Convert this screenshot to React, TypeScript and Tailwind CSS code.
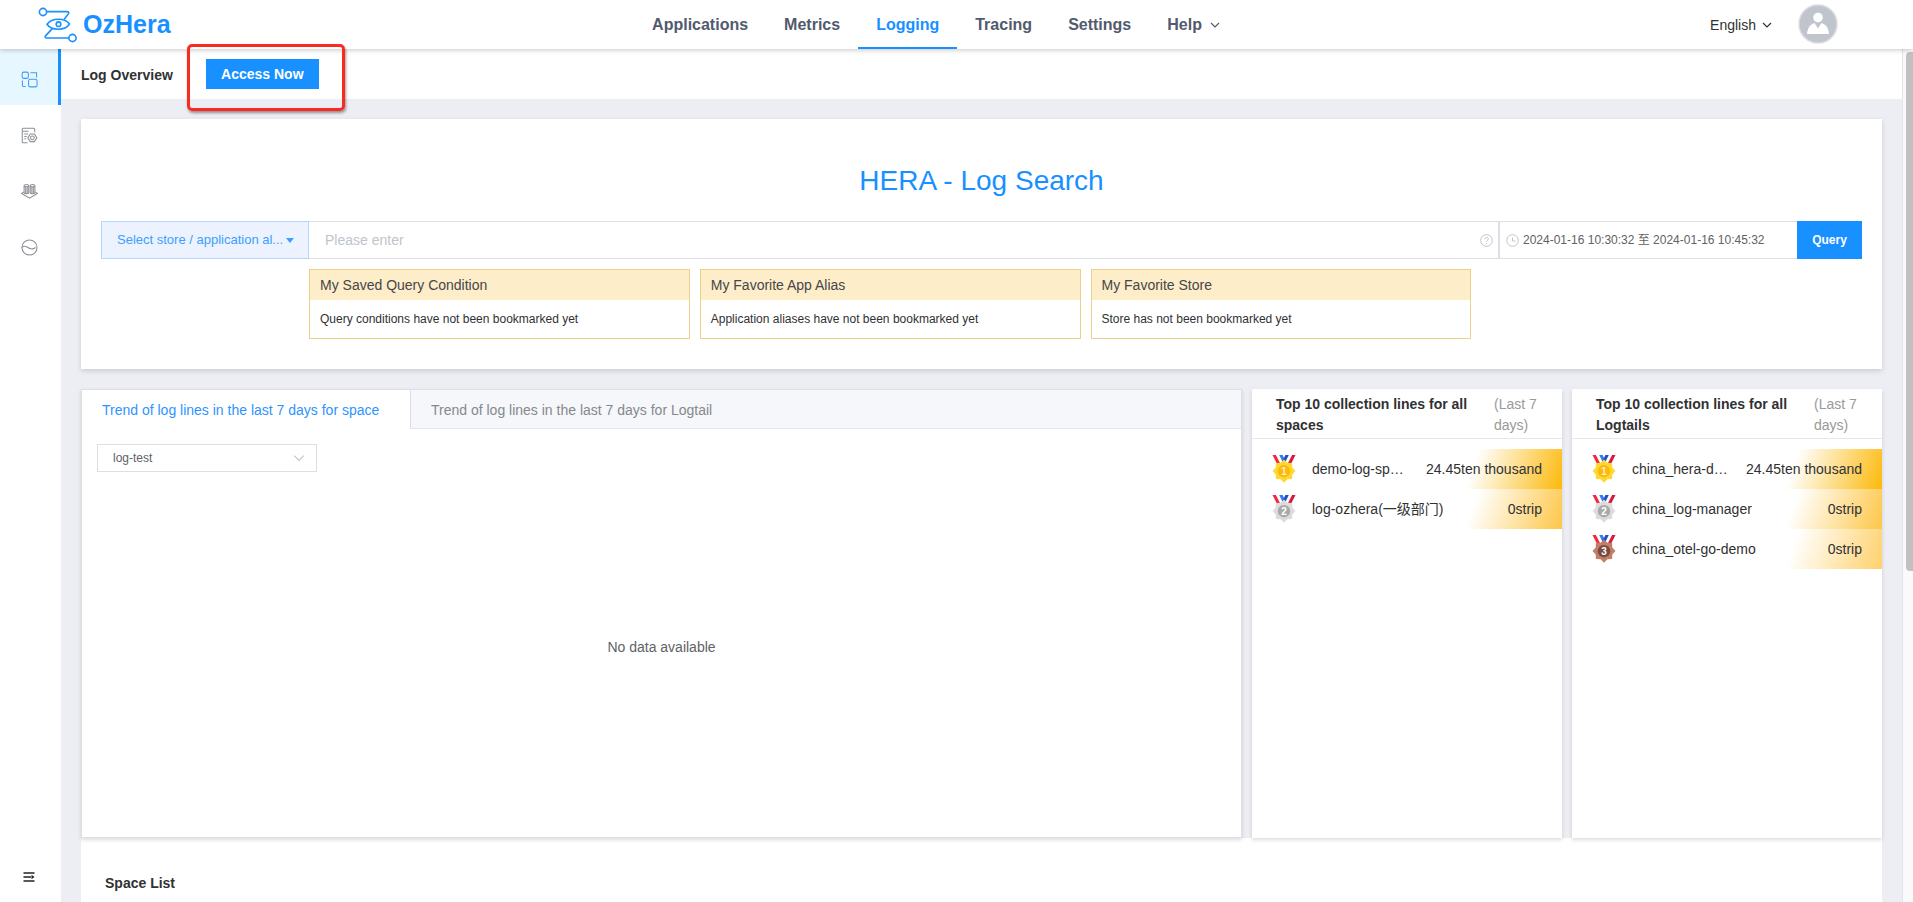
import type { ReactNode } from "react";

type Rank = 1 | 2 | 3;

interface RankRow {
  rank: Rank;
  name: string;
  value: string;
}

const medalColors: Record<Rank, { star: string; disc: string; digit: string }> = {
  1: { star: "#fdd835", disc: "#fbb90b", digit: "#fff3c4" },
  2: { star: "#dcdcdc", disc: "#a9a9a9", digit: "#ffffff" },
  3: { star: "#c07f68", disc: "#7a4a40", digit: "#ffffff" },
};

const rowShade: Record<Rank, string> = {
  1: "bg-[linear-gradient(110deg,#ffffff_12%,#fcb90b_100%)]",
  2: "bg-[linear-gradient(110deg,#ffffff_12%,#fdc748_100%)]",
  3: "bg-[linear-gradient(110deg,#ffffff_12%,#fed16b_100%)]",
};

const topSpaces: RankRow[] = [
  { rank: 1, name: "demo-log-sp…", value: "24.45ten thousand" },
  { rank: 2, name: "log-ozhera(一级部门)", value: "0strip" },
];

const topLogtails: RankRow[] = [
  { rank: 1, name: "china_hera-d…", value: "24.45ten thousand" },
  { rank: 2, name: "china_log-manager", value: "0strip" },
  { rank: 3, name: "china_otel-go-demo", value: "0strip" },
];

function Logo() {
  return (
    <svg width="39" height="36" viewBox="0 0 39 36" fill="none" stroke="#1890ff" strokeWidth="1.6" aria-hidden="true">
      <circle cx="5" cy="5" r="3.6" />
      <circle cx="34.500" cy="31" r="3.6" />
      <path d="M8.500 4.600H29c1.800 0 2.200 1 1.300 2.300L26 12.500" />
      <path d="M31 31H9c-2 0-2.300-1-1.200-2.400l6.500-7" />
      <path d="M9 17.200c2.500-3.300 6.700-5 11.500-5s8.800 1.700 11 4.800c-2.200 3.400-6.500 5.200-11.300 5.200S11.200 20.500 9 17.200z" />
      <circle cx="20.500" cy="17.200" r="2.300" />
    </svg>
  );
}

function Medal({ rank }: { rank: Rank }) {
  const c = medalColors[rank];
  return (
    <svg width="24" height="28" viewBox="0 0 24 28" className="shrink-0" aria-hidden="true">
      <path d="M.5 0h3.400l4.300 8.500H4.800z" fill="#f5283c" />
      <path d="M23.500 0h-3.400l-4.300 8.500h3.400z" fill="#d7193a" />
      <path d="M7.200 0h3.400l3.400 7h-3.400z" fill="#2f80f0" />
      <path d="M16.800 0h-3.400l-3.400 7h3.400z" fill="#1f4fc8" />
      <path
        d="M12 4.500L15.400 7.700 20.100 7.900 20.300 12.600 23.500 16 20.300 19.400 20.100 24.100 15.400 24.300 12 27.800 8.600 24.300 3.900 24.100 3.700 19.400.500 16 3.700 12.600 3.900 7.900 8.600 7.700z"
        fill={c.star}
      />
      <circle cx="12" cy="16.200" r="6.200" fill={c.disc} />
      <text x="12" y="19.800" textAnchor="middle" fontSize="10" fontWeight="700" fill={c.digit}>
        {rank}
      </text>
    </svg>
  );
}

function Chevron({ size, color, width }: { size: number; color: string; width: number }) {
  return (
    <svg width={size} height={size} viewBox="0 0 10 10" fill="none" stroke={color} strokeWidth={width} aria-hidden="true">
      <path d="M1 3l4 4 4-4" />
    </svg>
  );
}

function SideItem({ label, active, children }: { label: string; active?: boolean; children: ReactNode }) {
  return (
    <a
      href="#"
      aria-label={label}
      className={
        active
          ? "flex h-14 items-center justify-center border-r-3 border-[#1890ff] bg-[#e6f7ff] pt-[5px] pl-px text-[#3d9bfb]"
          : "flex h-14 items-center justify-center border-r-3 border-transparent pt-[5px] pl-px text-[#8b8e94]"
      }
    >
      <svg width="17" height="17" viewBox="0 0 18 18" fill="none" stroke="currentColor" strokeWidth="1.100" aria-hidden="true">
        {children}
      </svg>
    </a>
  );
}

function Sidebar() {
  return (
    <aside className="flex w-[61px] shrink-0 flex-col bg-white">
      <nav aria-label="Logging" className="flex flex-col">
        <SideItem label="Log Overview" active>
          <rect x="1.200" y="1.200" width="6.600" height="6.600" rx="1.800" />
          <path d="M10 1.800h6.500v5M1.500 10v5c0 1 .6 1.500 1.500 1.500h2" />
          <rect x="8" y="8.800" width="9" height="8" rx="1.800" />
        </SideItem>
        <SideItem label="Access">
          <path d="M14.500 5.500V2.500c0-.8-.4-1.200-1.200-1.200H2.500c-.8 0-1.200.4-1.200 1.200v13c0 .8.400 1.200 1.200 1.200H7M2 4.500h6M3.500 7.500h4M3.500 10h2.500M3.500 12.500h2" />
          <path d="M9.800 7.500h4.400l2.600 4-2.600 4H9.800l-2.600-4z" />
          <circle cx="12" cy="11.500" r="2" />
        </SideItem>
        <SideItem label="Storage">
          <path d="M3.300 3v7.500c0 1.300 4.900 1.300 4.900 0V3M9.800 3v7.500c0 1.300 4.900 1.300 4.900 0V3M5 4v7M6.600 4v7M11.500 4v7M13.100 4v7" />
          <ellipse cx="5.750" cy="2.800" rx="2.450" ry="1.200" />
          <ellipse cx="12.250" cy="2.800" rx="2.450" ry="1.200" />
          <path d="M3 9.500L.600 11l8.400 5 8.400-5L15 9.500" />
        </SideItem>
        <SideItem label="Trends">
          <circle cx="9" cy="9" r="8" />
          <path d="M1 8.800c2-1.600 3.700-1.300 5.300-.3 1.800 1.200 3.200 2 5 2 1.500 0 2.700-.5 4.200-1.500" />
        </SideItem>
      </nav>
      <button type="button" aria-label="Collapse menu" className="mt-auto mb-[13px] ml-5 flex h-6 w-[18px] items-center justify-center text-[#202226]">
        <svg width="12" height="10" viewBox="0 0 12 10" fill="none" stroke="currentColor" strokeWidth="1.400" aria-hidden="true">
          <path d="M.5 1h11M.500 5h7.500M.500 9h11" />
          <path d="M8.500 2.800l3 2.200-3 2.200z" fill="currentColor" stroke="none" />
        </svg>
      </button>
    </aside>
  );
}

const navLink = "flex h-[49px] items-center border-b-2 border-transparent px-[18px] pt-0.5";

function TopBar() {
  return (
    <header className="relative z-10 flex h-[49px] shrink-0 items-center bg-white shadow-[0_1px_5px_rgba(0,0,0,0.22)]">
      <a href="#" className="flex flex-1 items-center gap-1.5 pl-[38px] text-[25px] font-bold text-[#1890ff]">
        <Logo />
        OzHera
      </a>
      <nav aria-label="Main" className="flex pr-1 text-base font-bold text-[#515a6e]">
        <a href="#" className={navLink}>Applications</a>
        <a href="#" className={navLink}>Metrics</a>
        <a href="#" aria-current="page" className="flex h-[49px] items-center border-b-2 border-[#1890ff] px-[18px] pt-0.5 text-[#1890ff]">
          Logging
        </a>
        <a href="#" className={navLink}>Tracing</a>
        <a href="#" className={navLink}>Settings</a>
        <button type="button" className="flex h-[49px] items-center gap-2 border-b-2 border-transparent px-[18px] pt-0.5">
          Help <Chevron size={10} color="#515a6e" width={1.2} />
        </button>
      </nav>
      <div className="flex flex-1 items-center justify-end gap-[26px] pr-[75px]">
        <button type="button" className="flex items-center gap-1.5 text-sm text-[#303133]">
          English <Chevron size={10} color="#303133" width={1.2} />
        </button>
        <button type="button" aria-label="Account">
          <svg width="40" height="40" viewBox="0 0 40 40" className="-mt-0.5" aria-hidden="true">
            <circle cx="20" cy="20" r="19" fill="#c0c4cc" stroke="#dcdcdc" strokeWidth="1.500" />
            <circle cx="20" cy="13.500" r="4.800" fill="#fff" />
            <path d="M9 30c.5-6 3-9.500 7.500-11l3.500 5.500 3.500-5.500c4.500 1.500 7 5 7.500 11z" fill="#fff" />
          </svg>
        </button>
      </div>
    </header>
  );
}

function BookmarkCard({ title, text }: { title: string; text: string }) {
  return (
    <section className="border border-[#ecd08c] bg-white">
      <h3 className="bg-[#feedc9] px-2.5 text-sm leading-[30px] font-medium text-[#45474b]">{title}</h3>
      <p className="px-2.5 text-xs leading-[38px] text-[#303133]">{text}</p>
    </section>
  );
}

function SearchPanel() {
  return (
    <section className="bg-white px-5 pt-[41px] pb-[30px] shadow-[0_2px_5px_rgba(0,0,0,0.15)]">
      <h1 className="text-center text-[28px] leading-[42px] text-[#1890ff]">HERA - Log Search</h1>
      <form className="mt-[19px] flex h-[38px] text-xs">
        <button
          type="button"
          className="flex w-52 items-center justify-between border border-[#b3d8ff] bg-[#ecf3fe] pr-3.5 pl-[15px] text-[13px] font-medium whitespace-nowrap text-[#409eff]"
        >
          Select store / application al...
          <svg width="8" height="5" viewBox="0 0 8 5" aria-hidden="true">
            <path d="M0 0h8L4 5z" fill="#409eff" />
          </svg>
        </button>
        <label className="flex flex-1 items-center border-y border-r border-[#dcdfe6] pr-[5px] pl-4">
          <input
            type="text"
            aria-label="Query"
            placeholder="Please enter"
            className="min-w-0 flex-1 text-sm outline-none placeholder:text-[#c0c4cc]"
          />
          <svg width="13" height="13" viewBox="0 0 13 13" fill="none" stroke="#c0c4cc" aria-hidden="true">
            <circle cx="6.500" cy="6.500" r="5.800" />
            <path d="M4.800 5.200c0-2.300 3.500-2.300 3.500 0 0 1.200-1.800 1.200-1.800 2.600M6.500 9v1" />
          </svg>
        </label>
        <label className="flex w-[298px] items-center gap-1 border border-r-0 border-[#dcdfe6] pl-1.5">
          <svg width="13" height="13" viewBox="0 0 13 13" fill="none" stroke="#c0c4cc" aria-hidden="true">
            <circle cx="6.500" cy="6.500" r="5.800" />
            <path d="M6.500 3.500v3.500h3" />
          </svg>
          <input
            type="text"
            aria-label="Time range"
            defaultValue="2024-01-16 10:30:32 至 2024-01-16 10:45:32"
            className="min-w-0 flex-1 text-xs text-[#606266] outline-none"
          />
        </label>
        <button type="submit" className="w-[65px] bg-[#1890ff] font-bold text-white">Query</button>
      </form>
      <div className="mt-2.5 grid grid-cols-4 gap-2.5 pl-52">
        <BookmarkCard title="My Saved Query Condition" text="Query conditions have not been bookmarked yet" />
        <BookmarkCard title="My Favorite App Alias" text="Application aliases have not been bookmarked yet" />
        <BookmarkCard title="My Favorite Store" text="Store has not been bookmarked yet" />
      </div>
    </section>
  );
}

function TrendPanel() {
  return (
    <section className="flex flex-col border border-[#dcdfe6] bg-white shadow-[0_2px_4px_rgba(0,0,0,0.14)]">
      <div role="tablist" className="flex bg-[#f5f7fa] text-sm font-medium">
        <button type="button" role="tab" aria-selected="true" className="h-[39px] w-[329px] border-r border-[#dcdfe6] bg-white px-5 text-left whitespace-nowrap text-[#2f93ff]">
          Trend of log lines in the last 7 days for space
        </button>
        <button type="button" role="tab" aria-selected="false" className="h-[39px] flex-1 border-b border-[#e4e7ed] px-5 pt-px text-left text-[#85888e]">
          Trend of log lines in the last 7 days for Logtail
        </button>
      </div>
      <div className="flex h-[408px] flex-col p-[15px]">
        <div className="relative w-[220px]">
          <select aria-label="Space" className="h-7 w-full appearance-none border border-[#dcdfe6] bg-white px-[15px] text-xs text-[#606266]">
            <option>log-test</option>
          </select>
          <span className="pointer-events-none absolute top-2 right-3">
            <Chevron size={12} color="#c0c4cc" width={0.9} />
          </span>
        </div>
        <p className="flex flex-1 items-center justify-center text-sm text-[#606266]">No data available</p>
      </div>
    </section>
  );
}

function RankPanel({ title, rows }: { title: string; rows: RankRow[] }) {
  return (
    <section className="bg-white shadow-[0_2px_4px_rgba(0,0,0,0.14)]">
      <header className="flex h-[50px] justify-between border-b border-[#e8e8e8] pt-[5px] pr-5 pl-6 text-sm leading-[21px]">
        <h2 className="w-[195px] font-bold text-[#303133]">{title}</h2>
        <span className="w-12 text-[#999999]">(Last 7 days)</span>
      </header>
      <ol className="mt-2.5 text-sm text-[#303133]">
        {rows.map((row) => (
          <li key={row.rank} className="relative flex h-10 items-center pr-5 pl-5">
            <span className={`absolute inset-y-0 right-0 w-24 ${rowShade[row.rank]}`} />
            <Medal rank={row.rank} />
            <span className="relative ml-4 flex-1 whitespace-nowrap">{row.name}</span>
            <span className="relative shrink-0">{row.value}</span>
          </li>
        ))}
      </ol>
    </section>
  );
}

export default function App() {
  return (
    <div className="flex h-screen flex-col overflow-hidden bg-[#edeef3] font-['Liberation_Sans','Noto_Sans_CJK_SC',sans-serif]">
      <TopBar />
      <div className="flex min-h-0 flex-1">
        <Sidebar />
        <main className="min-w-0 flex-1">
          <div className="flex h-[50px] items-center bg-white pl-5 text-sm">
            <h2 className="pt-0.5 font-bold text-[#303133]">Log Overview</h2>
            <div className="relative ml-[33px]">
              <button type="button" className="h-[30px] w-[113px] bg-[#1890ff] font-bold text-white">
                Access Now
              </button>
              <span className="pointer-events-none absolute -top-[15px] -right-[26px] -bottom-[22px] -left-[19px] z-20 rounded-[5px] border-3 border-[#fb2a20] shadow-[1px_2px_3px_rgba(0,0,0,0.4)]" />
            </div>
          </div>
          <div className="p-5">
            <SearchPanel />
            <div className="mt-5 grid grid-cols-[1fr_310px_310px] gap-2.5">
              <TrendPanel />
              <RankPanel title="Top 10 collection lines for all spaces" rows={topSpaces} />
              <RankPanel title="Top 10 collection lines for all Logtails" rows={topLogtails} />
            </div>
            <section className="h-40 bg-white px-6 pt-[35px]">
              <h2 className="text-sm font-bold text-[#303133]">Space List</h2>
            </section>
          </div>
        </main>
        <div aria-hidden="true" className="w-[11px] shrink-0 border-l border-[#e4e4e4] bg-[#fafafa] pt-[3px] pl-[3px]">
          <div className="h-[61%] rounded-l-[4px] bg-[#c1c1c1]" />
        </div>
      </div>
    </div>
  );
}
